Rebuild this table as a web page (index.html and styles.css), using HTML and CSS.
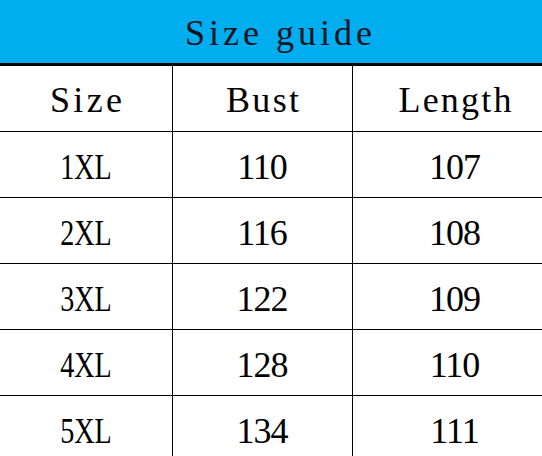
FILE: index.html
```html
<!DOCTYPE html>
<html>
<head>
<meta charset="utf-8">
<link rel="stylesheet" href="styles.css">
</head>
<body>
<div class="guide">
  <div class="title">Size guide</div>
  <div class="cell head"><span class="word w-size">Size</span></div>
  <div class="cell head"><span class="word w-bust">Bust</span></div>
  <div class="cell head"><span class="word w-length">Length</span></div>

  <div class="cell"><span class="label">1XL</span></div>
  <div class="cell"><span class="num">110</span></div>
  <div class="cell"><span class="num">107</span></div>

  <div class="cell"><span class="label">2XL</span></div>
  <div class="cell"><span class="num">116</span></div>
  <div class="cell"><span class="num">108</span></div>

  <div class="cell"><span class="label">3XL</span></div>
  <div class="cell"><span class="num">122</span></div>
  <div class="cell"><span class="num">109</span></div>

  <div class="cell"><span class="label">4XL</span></div>
  <div class="cell"><span class="num">128</span></div>
  <div class="cell"><span class="num">110</span></div>

  <div class="cell"><span class="label">5XL</span></div>
  <div class="cell"><span class="num">134</span></div>
  <div class="cell"><span class="num">111</span></div>
</div>
</body>
</html>
```
FILE: styles.css
```css
html, body {
  margin: 0;
  padding: 0;
  background: #ffffff;
  overflow: hidden;
}

.guide {
  width: 557px;
  display: grid;
  grid-template-columns: 172px 179px 204px;
  grid-auto-rows: 65px;
  gap: 1px;
  background: #000000;
  font-family: "Liberation Serif", "Times New Roman", serif;
  font-size: 36px;
  color: #000000;
}

.title {
  grid-column: 1 / -1;
  height: 64px;
  margin-top: -1px;
  background: #00aeef;
  color: #0a1420;
  display: flex;
  align-items: center;
  justify-content: center;
  padding-top: 3px;
  box-sizing: border-box;
  letter-spacing: 4px;
  text-indent: 4px;
}

.cell {
  background: #ffffff;
  display: flex;
  align-items: center;
  justify-content: center;
  padding-top: 5px;
  box-sizing: border-box;
}

.cell.head {
  padding-top: 2px;
}

.word {
  display: inline-block;
}

.w-size {
  letter-spacing: 3.3px;
  margin-right: -3.3px;
}

.w-bust {
  letter-spacing: 2.3px;
  margin-right: -2.3px;
}

.w-length {
  letter-spacing: 2.2px;
  margin-right: -2.2px;
}

.label {
  display: inline-block;
  transform: scaleX(0.78);
}

.num {
  display: inline-block;
  letter-spacing: -1px;
  margin-right: 1px;
}
```
